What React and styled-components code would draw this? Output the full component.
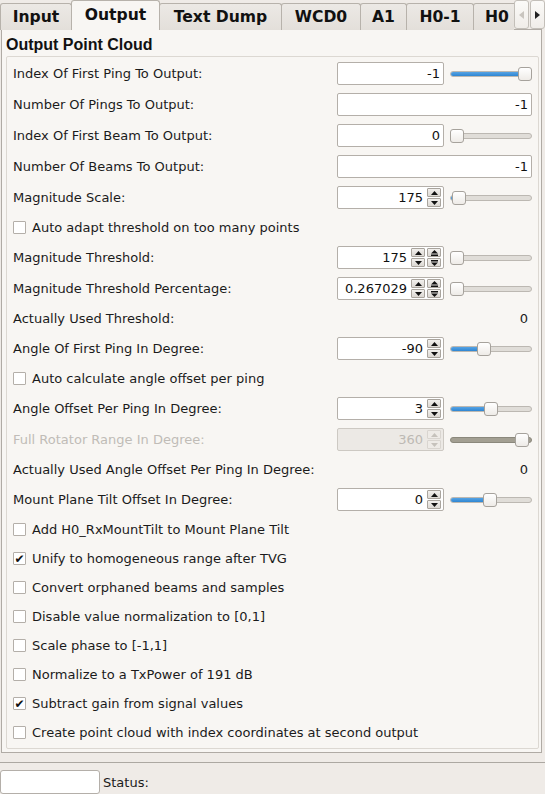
import React from "react";
import styled, { createGlobalStyle, css } from "styled-components";

const GlobalStyle = createGlobalStyle`
  html, body { margin: 0; padding: 0; background: #efebe7; }
  body { font-family: "DejaVu Sans", "Noto Sans", sans-serif; font-size: 13px; color: #1b1b1b; }
  * { box-sizing: border-box; }
`;

const Window = styled.div`
  width: 545px;
  height: 794px;
  display: flex;
  flex-direction: column;
  background: #efebe7;
  overflow: hidden;
`;

const TabBar = styled.div`
  height: 30px;
  display: flex;
  align-items: stretch;
  position: relative;
  z-index: 2;
`;

const TabStrip = styled.div`
  width: 514px;
  display: flex;
  align-items: flex-end;
  overflow: hidden;
`;

const Tab = styled.div`
  flex: none;
  width: ${(p) => p.$w}px;
  height: ${(p) => (p.$active ? "31px" : "27px")};
  margin-bottom: ${(p) => (p.$active ? "-1px" : "0")};
  margin-left: -1px;
  display: flex;
  align-items: center;
  justify-content: ${(p) => (p.$start ? "flex-start" : "center")};
  padding-left: ${(p) => (p.$start ? "11px" : "0")};
  font-family: "DejaVu Sans", sans-serif;
  font-weight: bold;
  font-size: 15.6px;
  color: #111;
  border: 1px solid #b7b2ab;
  border-bottom: none;
  border-radius: 3px 3px 0 0;
  white-space: nowrap;
  ${(p) =>
    p.$active
      ? css`
          background: #f8f6f3;
          position: relative;
          z-index: 1;
          padding-bottom: 2px;
        `
      : css`
          background: linear-gradient(#ece9e5, #e3dfda);
        `}
  &:first-child { margin-left: 0; }
`;

const ScrollButtons = styled.div`
  display: flex;
  gap: 1px;
  height: 29px;
`;

const ScrollBtn = styled.div`
  width: 15px;
  height: 29px;
  border: 1px solid #c3bfb9;
  border-radius: 3px;
  background: linear-gradient(#fbfaf8, #f0ede9);
  display: flex;
  align-items: center;
  justify-content: center;
  color: ${(p) => (p.$disabled ? "#c9c5bf" : "#222")};
`;

const Pane = styled.div`
  margin: -1px 3px 0 1px;
  border: 1px solid #b0aba5;
  background: #f8f6f3;
  display: flex;
  flex-direction: column;
  height: 724px;
`;

const Title = styled.div`
  height: 26px;
  padding: 6px 0 0 4px;
  font-family: "Liberation Sans", Arial, sans-serif;
  font-weight: bold;
  font-size: 16px;
  color: #111;
`;

const Group = styled.div`
  margin: 0 2px 0 4px;
  border: 1px solid #dcd8d2;
  border-radius: 2px;
  padding: 1px 6px 1px 6px;
  display: flex;
  flex-direction: column;
`;

const Row = styled.div`
  height: ${(p) => p.$h}px;
  display: flex;
  align-items: center;
  justify-content: space-between;
`;

const Label = styled.span`
  color: ${(p) => (p.$disabled ? "#c0bcb7" : "#1b1b1b")};
  white-space: nowrap;
`;

const Value = styled.span`
  padding-right: 4px;
`;

const Controls = styled.div`
  display: flex;
  align-items: center;
  gap: 6px;
`;

const Box = styled.div`
  width: ${(p) => (p.$wide ? 195 : 107)}px;
  height: 23px;
  border: 1px solid ${(p) => (p.$disabled ? "#cdc9c3" : "#b4afa9")};
  border-radius: 2px;
  background: ${(p) => (p.$disabled ? "#ece9e5" : "#ffffff")};
  display: flex;
  align-items: center;
  padding: 0 2px 0 4px;
  gap: 2px;
`;

const BoxText = styled.span`
  flex: 1;
  text-align: right;
  padding-right: ${(p) => p.$pr || 0}px;
  color: ${(p) => (p.$disabled ? "#bdb9b4" : "#111")};
`;

const SpinCol = styled.div`
  width: 14px;
  height: 19px;
  display: flex;
  flex-direction: column;
  gap: 1px;
`;

const SpinBtn = styled.div`
  flex: 1;
  background: ${(p) => (p.$disabled ? "#eeebe7" : "linear-gradient(#f2f0ed, #dcd8d3)")};
  border: 1px solid ${(p) => (p.$disabled ? "#d9d5d0" : "#a9a49d")};
  border-radius: 1px;
  display: flex;
  align-items: center;
  justify-content: center;
  color: ${(p) => (p.$disabled ? "#c6c2bc" : "#111")};
`;

const SliderWrap = styled.div`
  width: 82px;
  height: 16px;
  position: relative;
  display: flex;
  align-items: center;
`;

const Groove = styled.div`
  width: 100%;
  height: 6px;
  border-radius: 3px;
  border: 1px solid ${(p) => (p.$disabled ? "#8b887c" : "#bcb8b2")};
  background: ${(p) => (p.$disabled ? "#a39f92" : "#e0ddd8")};
  overflow: hidden;
  display: flex;
`;

const Fill = styled.div`
  height: 100%;
  background: linear-gradient(#56a3e4, #2f86d2);
  border-right: 1px solid #2a6fae;
`;

const Handle = styled.div`
  position: absolute;
  top: 1px;
  width: 14px;
  height: 14px;
  border: 1px solid #a6a29c;
  border-radius: 3px;
  background: linear-gradient(#ffffff, #eeebe7);
`;

const Check = styled.div`
  width: 13px;
  height: 13px;
  border: 1px solid #b4afa9;
  border-radius: 1px;
  background: #fff;
  display: flex;
  align-items: center;
  justify-content: center;
  font-size: 12px;
  line-height: 1;
  color: #111;
`;

const CheckRow = styled.div`
  height: 29px;
  display: flex;
  align-items: center;
  gap: 6px;
`;

const Separator = styled.div`
  margin-top: 9px;
  height: 1px;
  background: #aca8a2;
`;

const StatusBar = styled.div`
  flex: 1;
  display: flex;
  align-items: center;
  gap: 3px;
  padding-top: 7px;
`;

const StatusInput = styled.div`
  width: 100px;
  height: 24px;
  border: 1px solid #b4afa9;
  border-radius: 3px;
  background: #fff;
`;

const Up = () => (
  <svg width="7" height="4" viewBox="0 0 7 4"><path d="M3.5 0 L7 4 L0 4 Z" fill="currentColor" /></svg>
);
const Down = () => (
  <svg width="7" height="4" viewBox="0 0 7 4"><path d="M0 0 L7 0 L3.5 4 Z" fill="currentColor" /></svg>
);
const UpBar = () => (
  <svg width="7" height="6" viewBox="0 0 7 6"><path d="M3.5 0 L7 3.5 L0 3.5 Z" fill="currentColor" /><rect x="0" y="4.5" width="7" height="1.5" fill="currentColor" /></svg>
);
const DownBar = () => (
  <svg width="7" height="6" viewBox="0 0 7 6"><rect x="0" y="0" width="7" height="1.5" fill="currentColor" /><path d="M0 2.5 L7 2.5 L3.5 6 Z" fill="currentColor" /></svg>
);

const Spin = ({ disabled, page }) => (
  <>
    <SpinCol>
      <SpinBtn $disabled={disabled}><Up /></SpinBtn>
      <SpinBtn $disabled={disabled}><Down /></SpinBtn>
    </SpinCol>
    {page && (
      <SpinCol>
        <SpinBtn><UpBar /></SpinBtn>
        <SpinBtn><DownBar /></SpinBtn>
      </SpinCol>
    )}
  </>
);

const Slider = ({ pos, disabled }) => (
  <SliderWrap>
    <Groove $disabled={disabled}>{!disabled && pos > 0 && <Fill style={{ width: pos + 2 }} />}</Groove>
    <Handle style={{ left: pos }} />
  </SliderWrap>
);

const rows = [
  { t: "input", label: "Index Of First Ping To Output:", value: "-1", slider: 68 },
  { t: "input", label: "Number Of Pings To Output:", value: "-1", wide: true },
  { t: "input", label: "Index Of First Beam To Output:", value: "0", slider: 0 },
  { t: "input", label: "Number Of Beams To Output:", value: "-1", wide: true },
  { t: "input", label: "Magnitude Scale:", value: "175", spin: true, slider: 2 },
  { t: "check", label: "Auto adapt threshold on too many points" },
  { t: "input", label: "Magnitude Threshold:", value: "175", spin: true, page: true, slider: 0 },
  { t: "input", label: "Magnitude Threshold Percentage:", value: "0.267029", spin: true, page: true, slider: 0 },
  { t: "text", label: "Actually Used Threshold:", value: "0" },
  { t: "input", label: "Angle Of First Ping In Degree:", value: "-90", spin: true, slider: 27 },
  { t: "check", label: "Auto calculate angle offset per ping" },
  { t: "input", label: "Angle Offset Per Ping In Degree:", value: "3", spin: true, slider: 34 },
  { t: "input", label: "Full Rotator Range In Degree:", value: "360", spin: true, slider: 65, disabled: true },
  { t: "text", label: "Actually Used Angle Offset Per Ping In Degree:", value: "0" },
  { t: "input", label: "Mount Plane Tilt Offset In Degree:", value: "0", spin: true, slider: 33 },
  { t: "check", label: "Add H0_RxMountTilt to Mount Plane Tilt" },
  { t: "check", label: "Unify to homogeneous range after TVG", checked: true },
  { t: "check", label: "Convert orphaned beams and samples" },
  { t: "check", label: "Disable value normalization to [0,1]" },
  { t: "check", label: "Scale phase to [-1,1]" },
  { t: "check", label: "Normalize to a TxPower of 191 dB" },
  { t: "check", label: "Subtract gain from signal values", checked: true },
  { t: "check", label: "Create point cloud with index coordinates at second output" },
];

const tabs = [
  { name: "Input", w: 72 },
  { name: "Output", w: 89, active: true },
  { name: "Text Dump", w: 123 },
  { name: "WCD0", w: 80 },
  { name: "A1", w: 47 },
  { name: "H0-1", w: 68 },
  { name: "H0", w: 60, start: true },
];

export default function App() {
  return (
    <Window>
      <GlobalStyle />
      <TabBar>
        <TabStrip>
          {tabs.map((t) => (
            <Tab key={t.name} $active={t.active} $w={t.w} $start={t.start}>{t.name}</Tab>
          ))}
        </TabStrip>
        <ScrollButtons>
          <ScrollBtn $disabled>
            <svg width="5" height="8" viewBox="0 0 5 8"><path d="M5 0 L0 4 L5 8 Z" fill="currentColor" /></svg>
          </ScrollBtn>
          <ScrollBtn>
            <svg width="5" height="8" viewBox="0 0 5 8"><path d="M0 0 L5 4 L0 8 Z" fill="currentColor" /></svg>
          </ScrollBtn>
        </ScrollButtons>
      </TabBar>
      <Pane>
        <Title>Output Point Cloud</Title>
        <Group>
          {rows.map((r) => {
            if (r.t === "check")
              return (
                <CheckRow key={r.label}>
                  <Check>{r.checked ? "✔" : ""}</Check>
                  <Label>{r.label}</Label>
                </CheckRow>
              );
            if (r.t === "text")
              return (
                <Row key={r.label} $h={29}>
                  <Label>{r.label}</Label>
                  <Value>{r.value}</Value>
                </Row>
              );
            return (
              <Row key={r.label} $h={31}>
                <Label $disabled={r.disabled}>{r.label}</Label>
                <Controls>
                  <Box $wide={r.wide} $disabled={r.disabled}>
                    <BoxText $disabled={r.disabled} $pr={r.spin ? 2 : 1}>{r.value}</BoxText>
                    {r.spin && <Spin disabled={r.disabled} page={r.page} />}
                  </Box>
                  {r.slider !== undefined && <Slider pos={r.slider} disabled={r.disabled} />}
                </Controls>
              </Row>
            );
          })}
        </Group>
      </Pane>
      <Separator />
      <StatusBar>
        <StatusInput />
        <span>Status:</span>
      </StatusBar>
    </Window>
  );
}
